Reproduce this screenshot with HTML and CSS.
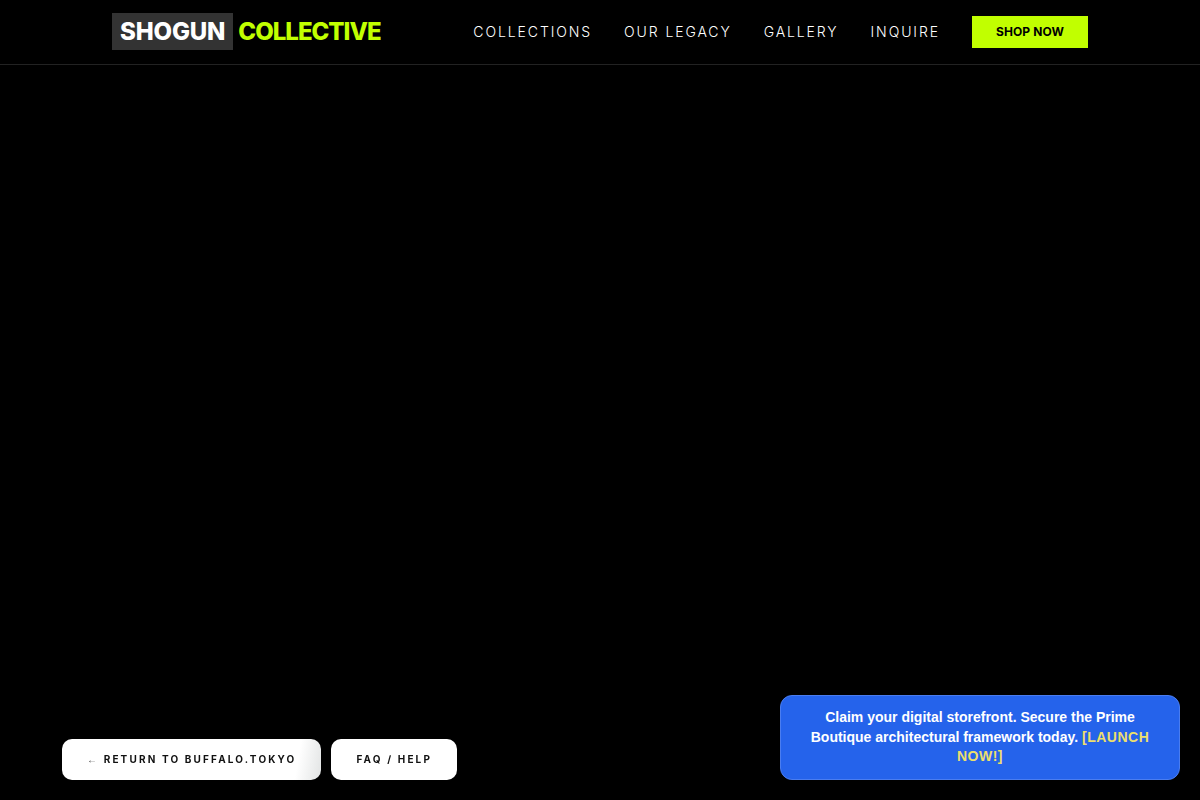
FILE: index.html
```html
<!DOCTYPE html>
<html lang="en">
<head>
  <meta charset="UTF-8">
  <meta name="viewport" content="width=device-width, initial-scale=1.0">
  <title>Shogun Collective</title>
  <link rel="stylesheet" href="styles.css">
</head>
<body>
  <header class="site-header">
    <div class="header-inner">
      <a class="logo" href="#"><span class="logo-box">SHOGUN</span> <span class="logo-accent">COLLECTIVE</span></a>
      <nav class="main-nav">
        <a href="#">COLLECTIONS</a>
        <a href="#">OUR LEGACY</a>
        <a href="#">GALLERY</a>
        <a href="#">INQUIRE</a>
        <a class="shop-btn" href="#">SHOP NOW</a>
      </nav>
    </div>
  </header>

  <div class="float-buttons">
    <a class="float-btn return-btn" href="#"><span class="arrow">←</span> RETURN TO BUFFALO.TOKYO</a>
    <a class="float-btn" href="#">FAQ / HELP</a>
  </div>

  <div class="promo">
    Claim your digital storefront. Secure the Prime Boutique architectural framework today. <a href="#">[LAUNCH NOW!]</a>
  </div>
</body>
</html>
```

FILE: styles.css
```css
* {
  margin: 0;
  padding: 0;
  box-sizing: border-box;
}

body {
  height: 800px;
  overflow: hidden;
  background: #000;
  color: #fff;
  font-family: Inter, "Liberation Sans", sans-serif;
}

a {
  color: inherit;
  text-decoration: none;
}

.site-header {
  height: 65px;
  border-bottom: 1px solid #222;
}

.header-inner {
  width: 976px;
  height: 63px;
  margin: 0 auto;
  display: flex;
  justify-content: space-between;
  align-items: center;
}

.logo {
  display: flex;
  align-items: center;
  gap: 5px;
  font-size: 24px;
  font-weight: 800;
  letter-spacing: -1px;
}

.logo-box {
  background: #333;
  padding: 4px 8px;
  line-height: 29px;
  letter-spacing: -0.15px;
}

.logo-accent {
  color: #c1ff00;
}

.main-nav {
  display: flex;
  align-items: center;
  gap: 32px;
  font-size: 14px;
  font-weight: 300;
  letter-spacing: 1.9px;
  color: #fff;
}

.main-nav .shop-btn {
  background: #c1ff00;
  color: #000;
  font-size: 12px;
  font-weight: 700;
  letter-spacing: 0.1px;
  line-height: 16px;
  padding: 8px 24px;
}

.float-buttons {
  position: fixed;
  left: 62px;
  bottom: 20px;
  display: flex;
  gap: 10px;
}

.float-btn {
  display: block;
  background: #fff;
  color: #111;
  border-radius: 10px;
  padding: 14px 25px;
  font-size: 10px;
  font-weight: 700;
  letter-spacing: 2.15px;
  line-height: 13px;
}

.return-btn {
  background: linear-gradient(100deg, #fff 90%, #e2e4e4);
}

.arrow {
  font-family: "Liberation Sans", sans-serif;
  font-weight: 400;
  color: #555;
}

.promo {
  position: fixed;
  right: 20px;
  bottom: 20px;
  width: 400px;
  padding: 12px 16px;
  background: #2563eb;
  border: 1px solid #4a7df0;
  border-radius: 12px;
  font-family: "Liberation Sans", sans-serif;
  font-size: 14px;
  font-weight: 700;
  line-height: 19.6px;
  text-align: center;
}

.promo a {
  color: #ecdf6c;
  letter-spacing: 0.5px;
}
```
